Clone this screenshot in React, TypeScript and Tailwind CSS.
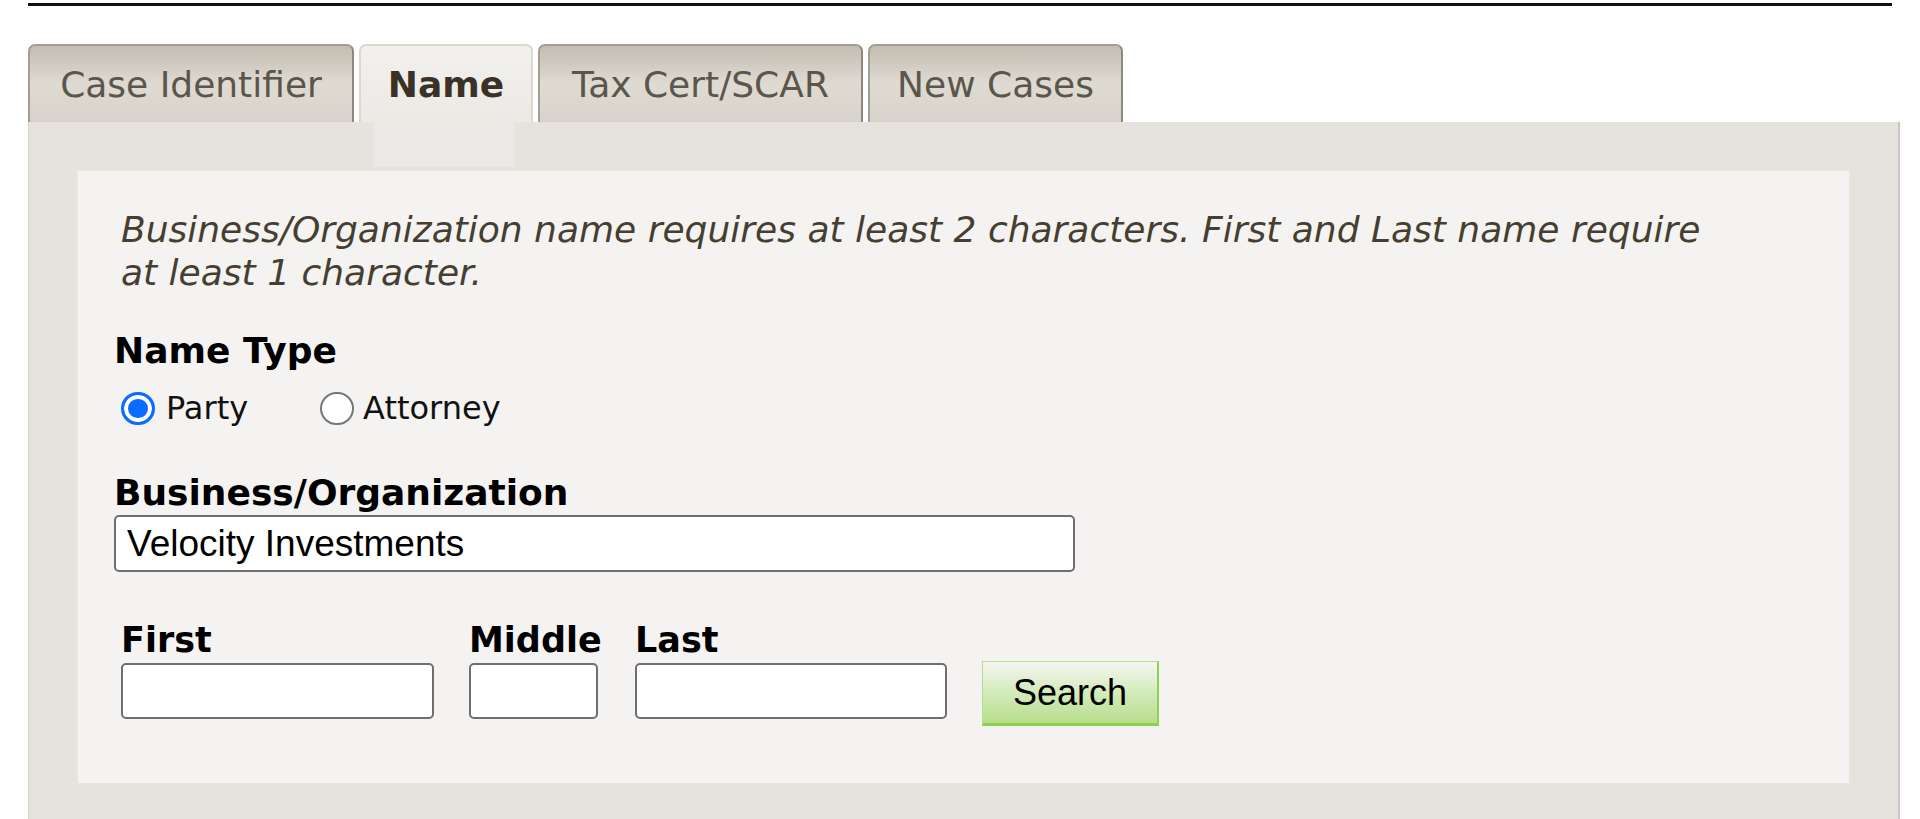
import { useState } from 'react';

const tabs = [
  { label: 'Case Identifier', width: 'w-[326px]' },
  { label: 'Name', width: 'w-[174px]' },
  { label: 'Tax Cert/SCAR', width: 'w-[325px]' },
  { label: 'New Cases', width: 'w-[255px]' },
];

export default function App() {
  const [active] = useState('Name');
  const [nameType, setNameType] = useState('party');
  const [business, setBusiness] = useState('Velocity Investments');

  return (
    <div className="h-[819px] overflow-hidden bg-white flex flex-col" style={{ fontFamily: '"DejaVu Sans", Verdana, sans-serif' }}>
      {/* top rule */}
      <div className="pt-[3px] pl-[28px] pr-[28px]">
        <div className="h-[3px] bg-[#111]" />
      </div>

      {/* Tabs */}
      <div className="mt-[38px] ml-[28px] flex items-end gap-[5px]">
        {tabs.map(tab => {
          const isActive = tab.label === active;
          return (
            <div
              key={tab.label}
              className={
                isActive
                  ? `${tab.width} h-[78px] flex items-center justify-center rounded-t-[7px] border-2 border-b-0 border-[#dcd8cf] bg-gradient-to-b from-[#f3f1ee] to-[#ebe9e4] text-[36px] font-bold text-[#3a3226]`
                  : `${tab.width} h-[78px] flex items-center justify-center rounded-t-[7px] border-2 border-b-0 border-[#a39d93] border-r-[#8d877d] bg-gradient-to-b from-[#c3bdb2] via-[#dfdbd3] to-[#d7d3ca] text-[36px] text-[#5b564b]`
              }
            >
              <span className="pt-[2px]">{tab.label}</span>
            </div>
          );
        })}
      </div>

      {/* Panel */}
      <div className="flex-1 ml-[28px] mr-[20px] bg-[#e6e3df] border-l border-r-2 border-l-[#d8d4cc] border-r-[#cbc7c0] px-[47px]">
        <div className="h-[47px]">
          <div className="ml-[298px] w-[140px] h-[45px] bg-[#ebe9e5]" />
        </div>

        <div className="bg-[#f4f3f1] border-2 border-[#e9e5d9] px-[36px] pt-[37px] pb-[57px]">
          <p className="ml-[7px] w-[1600px] text-[36px] leading-[43px] italic text-[#463e30]">
            Business/Organization name requires at least 2 characters. First and Last name require at least 1 character.
          </p>

          <div className="mt-[36px] text-[36px] leading-[42px] font-bold text-black">Name Type</div>
          <div className="mt-[16px] ml-[7px] h-[40px] flex items-center text-[32px] text-[#111]">
            <label className="flex items-center gap-[11px]">
              <input
                type="radio"
                name="nameType"
                checked={nameType === 'party'}
                onChange={() => setNameType('party')}
                className="appearance-none w-[34px] h-[33px] rounded-full border-2 border-[#767676] bg-white checked:border-[3px] checked:border-[#0b6cff] checked:bg-[#0b6cff] checked:shadow-[inset_0_0_0_4px_white]"
              />
              <span>Party</span>
            </label>
            <label className="ml-[72px] flex items-center gap-[9px]">
              <input
                type="radio"
                name="nameType"
                checked={nameType === 'attorney'}
                onChange={() => setNameType('attorney')}
                className="appearance-none w-[34px] h-[33px] rounded-full border-2 border-[#767676] bg-white checked:border-[3px] checked:border-[#0b6cff] checked:bg-[#0b6cff] checked:shadow-[inset_0_0_0_4px_white]"
              />
              <span>Attorney</span>
            </label>
          </div>

          <div className="mt-[44px] text-[36px] leading-[42px] font-bold text-black">Business/Organization</div>
          <input
            value={business}
            onChange={e => setBusiness(e.target.value)}
            className="mt-[1px] block w-[961px] h-[57px] rounded-[5px] border-2 border-[#6f6f6f] bg-white px-[11px] text-[37px] text-black outline-none"
            style={{ fontFamily: '"Liberation Sans", Arial, sans-serif' }}
          />

          <div className="mt-[47px] ml-[7px] flex items-start">
            <div className="w-[313px]">
              <div className="text-[35px] leading-[42px] font-bold text-black">First</div>
              <input className="mt-[2px] block w-[313px] h-[56px] rounded-[5px] border-2 border-[#6f6f6f] bg-white outline-none" />
            </div>
            <div className="ml-[35px] w-[129px]">
              <div className="text-[35px] leading-[42px] font-bold text-black whitespace-nowrap">Middle</div>
              <input className="mt-[2px] block w-[129px] h-[56px] rounded-[5px] border-2 border-[#6f6f6f] bg-white outline-none" />
            </div>
            <div className="ml-[37px] w-[312px]">
              <div className="text-[35px] leading-[42px] font-bold text-black">Last</div>
              <input className="mt-[2px] block w-[312px] h-[56px] rounded-[5px] border-2 border-[#6f6f6f] bg-white outline-none" />
            </div>
            <button
              className="ml-[35px] mt-[42px] w-[177px] h-[65px] border border-[#b5dd8f] border-r-2 border-b-[3px] border-r-[#8fd04f] border-b-[#8fd04f] bg-gradient-to-b from-[#f6f5f3] via-[#d3ebba] to-[#b8de8d] text-[36px] text-black"
              style={{ fontFamily: '"Liberation Sans", Arial, sans-serif' }}
            >
              Search
            </button>
          </div>
        </div>
      </div>
    </div>
  );
}
